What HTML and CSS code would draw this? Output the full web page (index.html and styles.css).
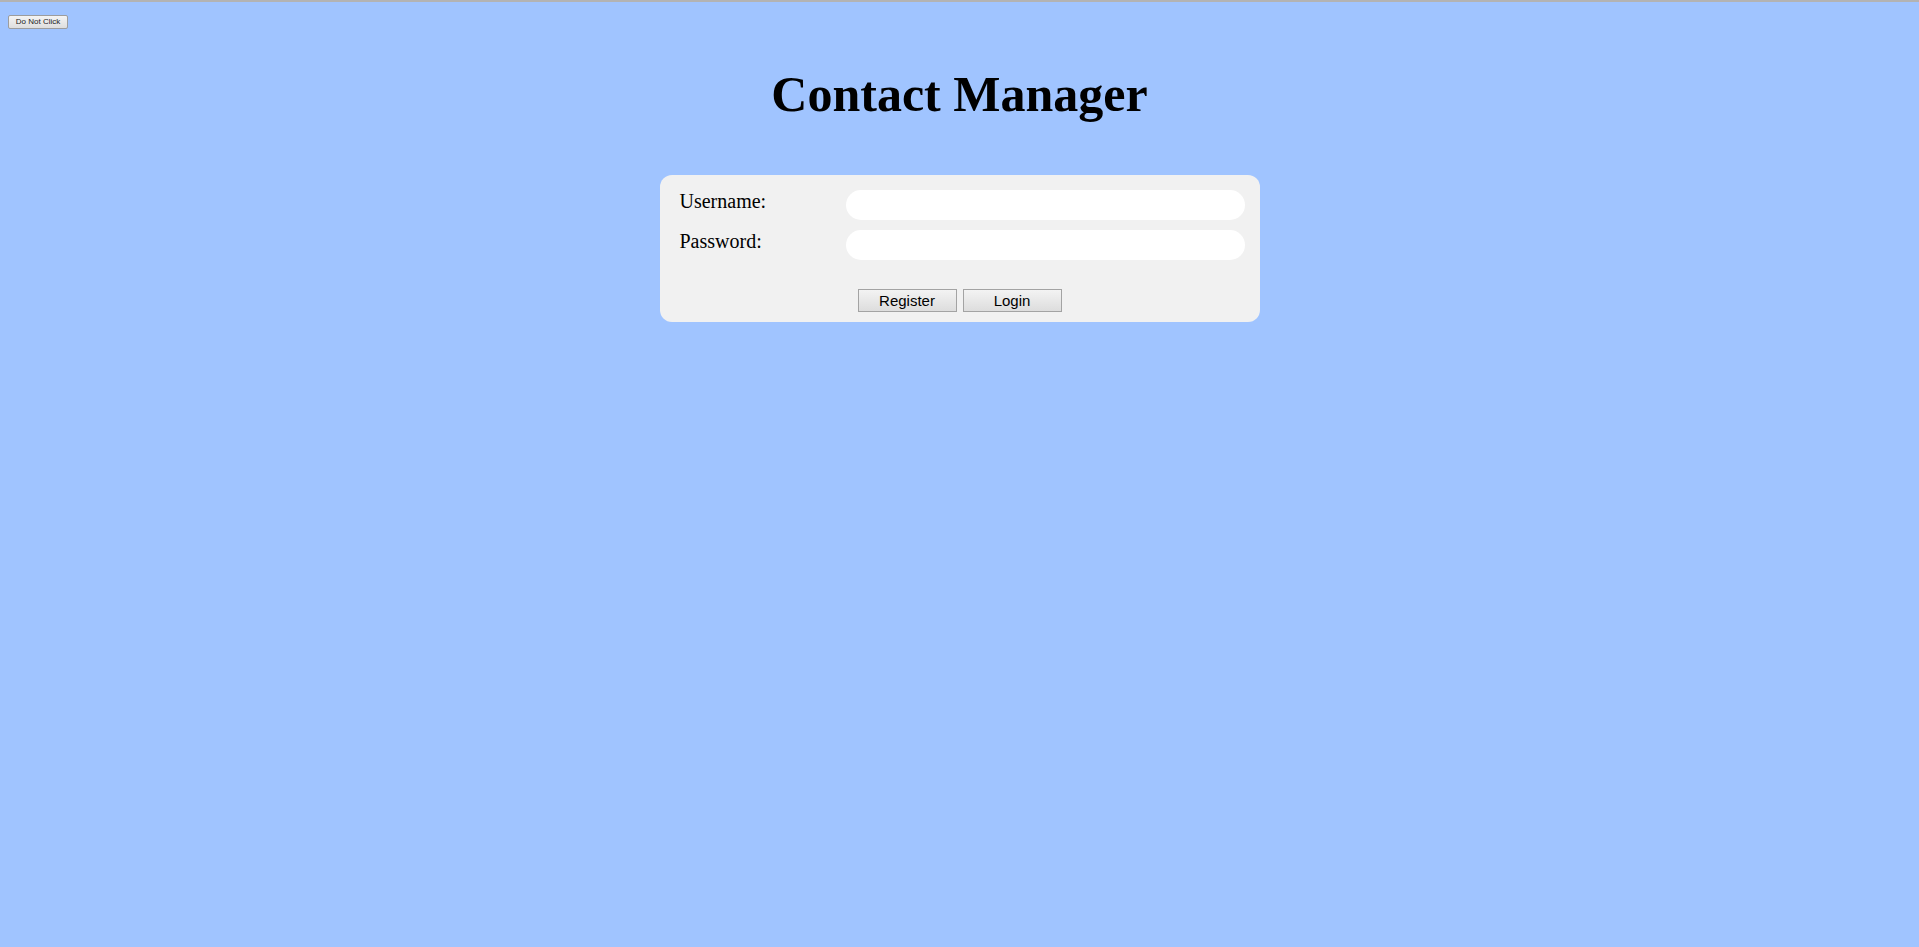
FILE: index.html
```html
<!DOCTYPE html>
<html>
<head>
<meta charset="utf-8">
<title>Contact Manager</title>
<link rel="stylesheet" href="styles.css">
</head>
<body>
<div class="topbar">
  <button class="danger-btn" type="button">Do Not Click</button>
</div>
<h1 class="title">Contact Manager</h1>
<form class="card">
  <div class="fields">
    <label class="label" for="u">Username:</label>
    <input class="field" id="u" type="text">
    <label class="label" for="p">Password:</label>
    <input class="field" id="p" type="password">
  </div>
  <div class="actions">
    <button class="btn" type="button">Register</button>
    <button class="btn" type="button">Login</button>
  </div>
</form>
</body>
</html>
```

FILE: styles.css
```css
html, body {
  margin: 0;
  padding: 0;
}
body {
  background: #a0c4ff;
  border-top: 2px solid #b3b3b3;
  min-height: 945px;
  font-family: "Liberation Serif", "Times New Roman", serif;
}
.topbar {
  display: flex;
  padding: 13px 8px 0 8px;
}
.danger-btn {
  font-family: "Liberation Sans", Arial, sans-serif;
  font-size: 8px;
  color: #222;
  height: 14px;
  width: 60px;
  padding: 0;
  border: 1px solid #9d9d9d;
  border-radius: 2px;
  background: linear-gradient(#f4f4f4, #dedede);
  line-height: 12px;
}
.title {
  margin: 36px 0 0 0;
  text-align: center;
  font-size: 50px;
  line-height: 59px;
  font-weight: bold;
  color: #000;
}
.card {
  box-sizing: border-box;
  width: 600px;
  margin: 51px auto 0 auto;
  padding: 15px 15px 10px 15px;
  background: #f1f1f1;
  border-radius: 12px;
}
.fields {
  display: grid;
  grid-template-columns: 171px 1fr;
  row-gap: 10px;
  align-items: start;
}
.label {
  padding-left: 5px;
  font-size: 20px;
  line-height: 23px;
  color: #000;
}
.field {
  box-sizing: border-box;
  height: 30px;
  width: 100%;
  border: none;
  border-radius: 15px;
  background: #fff;
  outline: none;
  padding: 0 12px;
}
.actions {
  display: flex;
  justify-content: center;
  gap: 6px;
  margin-top: 29px;
}
.btn {
  box-sizing: border-box;
  width: 99px;
  height: 23px;
  padding: 0;
  font-family: "Liberation Sans", Arial, sans-serif;
  font-size: 15px;
  color: #000;
  border: 1px solid #a3a3a3;
  border-radius: 0;
  background: linear-gradient(#f3f3f3, #dddddd);
}
```
